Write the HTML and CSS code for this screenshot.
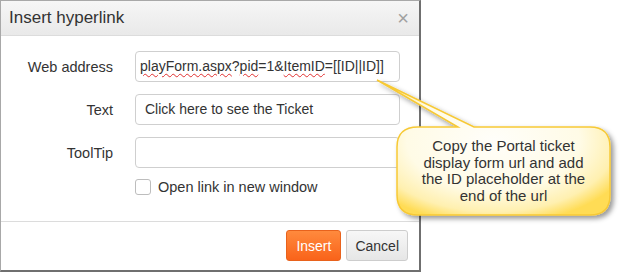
FILE: index.html
```html
<!DOCTYPE html>
<html lang="en">
<head>
    <meta charset="UTF-8">
    <title>Insert hyperlink</title>
    <link rel="stylesheet" href="styles.css">
</head>
<body>
    <div class="dialog">
        <div class="dialog-header">
            <span class="dialog-title">Insert hyperlink</span>
            <span class="close">&times;</span>
        </div>
        <div class="dialog-body">
            <label class="field-label">Web address</label>
            <div class="field-input url"><span class="typo">playForm.aspx</span>?<span class="typo">pid</span>=1&amp;<span class="typo">ItemID</span>=[[ID||ID]]</div>

            <label class="field-label">Text</label>
            <div class="field-input">Click here to see the Ticket</div>

            <label class="field-label">ToolTip</label>
            <div class="field-input"></div>

            <div class="check-row">
                <span class="checkbox"></span>
                <span>Open link in new window</span>
            </div>
        </div>
        <div class="dialog-footer">
            <button class="btn btn-primary">Insert</button>
            <button class="btn">Cancel</button>
        </div>
    </div>

    <svg class="callout-shape" width="624" height="272" viewBox="0 0 624 272">
        <defs>
            <radialGradient id="fill" cx="50%" cy="45%" r="62%">
                <stop offset="0%" stop-color="#fffefa"/>
                <stop offset="60%" stop-color="#fffbe6"/>
                <stop offset="85%" stop-color="#fff0b0"/>
                <stop offset="100%" stop-color="#ffdc55"/>
            </radialGradient>
            <filter id="shadow" x="-10%" y="-10%" width="130%" height="140%">
                <feDropShadow dx="3" dy="3" stdDeviation="2.5" flood-color="#000" flood-opacity="0.4"/>
            </filter>
        </defs>
        <path filter="url(#shadow)" fill="url(#fill)" stroke="#f7c935" stroke-width="1.5"
              d="M418 127 L458 127 L377 80 L474 127 L590 127 Q610 127 610 147 L610 195 Q610 215 590 215 L418 215 Q397 215 397 195 L397 147 Q397 127 418 127 Z"/>
    </svg>
    <div class="callout-text">Copy the Portal ticket<br>display form url and add<br>the ID placeholder at the<br>end of the url</div>
</body>
</html>
```

FILE: styles.css
```css
body { margin: 0; background: #fff; font-family: "Liberation Sans", Arial, sans-serif; color: #333; }

.dialog { width: 421px; height: 272px; box-sizing: border-box; border: 1px solid #a8a8a8; border-right: 2px solid #6f6f6f; border-bottom: 2px solid #6f6f6f; display: flex; flex-direction: column; background: #fff; }

.dialog-header { height: 34px; border-bottom: 1px solid #dcdcdc; background: linear-gradient(#f6f6f6, #e9e9e9); display: flex; align-items: center; justify-content: space-between; padding: 0 10px 0 8px; }
.dialog-title { font-size: 17px; color: #333; }
.close { font-size: 20px; color: #a0a0a0; line-height: 1; }

.dialog-body { display: grid; grid-template-columns: 112px 265px; column-gap: 22px; row-gap: 12px; align-items: center; padding-top: 15px; flex: 1; align-content: start; }
.field-label { text-align: right; font-size: 14.5px; }
.field-input { height: 31px; box-sizing: border-box; border: 1px solid #cfcfcf; border-radius: 4px; padding: 0 9px; font-size: 14px; line-height: 29px; white-space: nowrap; overflow: hidden; }
.field-input.url { padding-left: 4px; }
.typo { text-decoration: underline wavy #e03030; text-decoration-thickness: 1px; text-underline-offset: 2px; }

.check-row { grid-column: 2; display: flex; align-items: center; gap: 7px; font-size: 14.5px; margin-top: -1px; }
.checkbox { width: 14px; height: 14px; border: 1px solid #bdbdbd; border-radius: 3px; background: #fff; }

.dialog-footer { border-top: 1px solid #dcdcdc; display: flex; justify-content: flex-end; gap: 5px; padding: 8px 11px 9px; }
.btn { height: 31px; padding: 0 8px; font-family: inherit; font-size: 14px; color: #333; border: 1px solid #cdcdcd; border-radius: 3px; background: linear-gradient(#f7f7f7, #e6e6e6); }
.btn-primary { color: #fff; border-color: #e8621c; background: linear-gradient(#ff8a3d, #f9631a); padding: 0 9px; }

.callout-shape { position: absolute; left: 0; top: 0; pointer-events: none; }
.callout-text { position: absolute; left: 397px; top: 127px; width: 213px; height: 88px; display: flex; align-items: center; justify-content: center; text-align: center; font-size: 15px; line-height: 16.5px; color: #333; }
```
